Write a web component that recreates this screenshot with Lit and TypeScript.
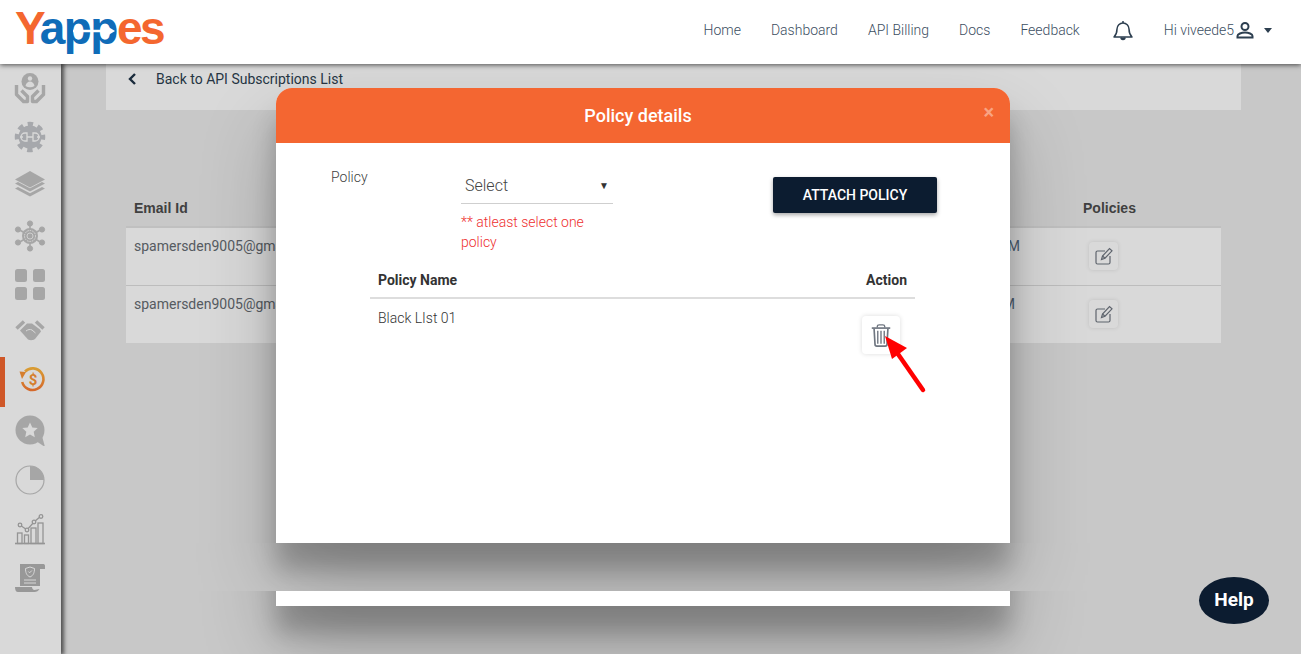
import { LitElement, html, css } from "lit";
import { customElement } from "lit/decorators.js";

const NAV = ["Home", "Dashboard", "API Billing", "Docs", "Feedback"];

const ROWS = [
  { email: "spamersden9005@gmail.com", date: "10:42:18 AM", pad: 69 },
  { email: "spamersden9005@gmail.com", date: "10:40:51 PM", pad: 74 },
];

const SIDE_ICONS = [
  {
    gap: 0,
    icon: html`<svg viewBox="0 0 32 32" fill="#a9a9a9">
      <circle cx="16" cy="9.500" r="8.500" />
      <circle cx="16" cy="6.500" r="2.200" fill="#fff" />
      <path d="M11.500 14c.5-3 2.500-4.500 4.500-4.500s4 1.500 4.500 4.500c-2.700 1.800-6.300 1.800-9 0z" fill="#fff" />
      <path d="M2.500 13v9.500l7 7h4v-5l-6-6" fill="none" stroke="#a9a9a9" stroke-width="3.400" stroke-linejoin="round" />
      <path d="M29.500 13v9.500l-7 7h-4v-5l6-6" fill="none" stroke="#a9a9a9" stroke-width="3.400" stroke-linejoin="round" />
    </svg>`,
  },
  {
    gap: 17,
    icon: html`<svg viewBox="0 0 32 32" fill="#a9acb2">
      <circle cx="16" cy="16" r="11.500" />
      <circle cx="16" cy="16" r="13" fill="none" stroke="#a9acb2" stroke-width="4.500" stroke-dasharray="5.400 4.810" stroke-dashoffset="2.700" />
      <path d="M6 16h3M13 16h6M23 16h3M13 12h-2a4 4 0 0 0 0 8h2zM19 12h2a4 4 0 0 1 0 8h-2z" fill="none" stroke="#fff" stroke-width="1.300" />
    </svg>`,
  },
  {
    gap: 15,
    icon: html`<svg viewBox="0 0 32 32" fill="#a9a9a9">
      <path d="M16 3l15 8.500-15 8-15-8z" />
      <path d="M1 15.500l3-1.600 12 6.400 12-6.400 3 1.600-15 8z" />
      <path d="M1 20.500l3-1.600 12 6.400 12-6.400 3 1.600-15 8z" />
    </svg>`,
  },
  {
    gap: 20,
    icon: html`<svg viewBox="0 0 32 32" fill="#a9a9a9" stroke="#a9a9a9">
      <path d="M16 3v26M4 9l24 14M28 9L4 23" stroke-width="1.600" />
      <circle cx="16" cy="3.500" r="2.600" />
      <circle cx="16" cy="28.500" r="2.600" />
      <circle cx="4" cy="9.500" r="2.600" />
      <circle cx="28" cy="9.500" r="2.600" />
      <circle cx="4" cy="22.500" r="2.600" />
      <circle cx="28" cy="22.500" r="2.600" />
      <circle cx="16" cy="16" r="8" stroke="none" />
      <circle cx="16" cy="16" r="5.500" fill="none" stroke="#fff" stroke-width="1" stroke-dasharray="1.500 1" />
      <circle cx="16" cy="16" r="3" fill="none" stroke="#fff" stroke-width=".8" />
    </svg>`,
  },
  {
    gap: 16,
    icon: html`<svg viewBox="0 0 32 32" fill="#a9a9a9">
      <rect x="1" y="1" width="12" height="13" rx="2.500" />
      <rect x="19" y="1" width="12" height="13" rx="2.500" />
      <rect x="1" y="19" width="12" height="13" rx="2.500" />
      <rect x="19" y="19" width="12" height="13" rx="2.500" />
    </svg>`,
  },
  {
    gap: 13,
    icon: html`<svg viewBox="0 0 32 32" fill="#a9a9a9">
      <path d="M2.500 15.500l7.500-7M29.500 15.500l-7.500-7" stroke="#a9a9a9" stroke-width="3.500" fill="none" />
      <path d="M6 17.500l7-7h5l8 6 1 2-6 7.500c-2 1.500-5 1.500-7 .5z" />
      <path d="M12 18c2-1.500 4-2 6-1l3.500 3" fill="none" stroke="#fff" stroke-width="1" />
    </svg>`,
  },
  {
    gap: 17,
    active: true,
    icon: html`<svg viewBox="0 0 32 32">
      <defs>
        <linearGradient id="refund" x1="0" y1="0" x2="0" y2="1">
          <stop offset="0" stop-color="#ffb83c" />
          <stop offset="1" stop-color="#fb7c33" />
        </linearGradient>
      </defs>
      <path d="M11 9.500a10.800 10.800 0 1 1-2.800 10.500" fill="none" stroke="url(#refund)" stroke-width="2.600" />
      <path d="M5.500 9.500l6.500 .5-4 7z" fill="#fb9435" />
      <text x="19" y="22.500" text-anchor="middle" class="dollar">$</text>
    </svg>`,
  },
  {
    gap: 20,
    icon: html`<svg viewBox="0 0 32 32" fill="#a9a9a9">
      <circle cx="16" cy="16" r="14.500" />
      <path d="M22 27l9 6-3-11z" />
      <path d="M16 8.500l2.300 5 5.400.6-4 3.700 1.100 5.400-4.800-2.800-4.800 2.800 1.100-5.400-4-3.700 5.400-.6z" fill="#fff" />
    </svg>`,
  },
  {
    gap: 18,
    icon: html`<svg viewBox="0 0 32 32" fill="#a9a9a9">
      <circle cx="16" cy="16" r="14" fill="none" stroke="#a9a9a9" stroke-width="1.200" />
      <path d="M16 16V2a14 14 0 0 1 14 14z" />
    </svg>`,
  },
  {
    gap: 18,
    icon: html`<svg viewBox="0 0 32 32" fill="none" stroke="#8a8a8a" stroke-width="1.300">
      <path d="M1 29.500h30" stroke-width="1.600" />
      <rect x="3.500" y="19" width="4.500" height="10.500" />
      <rect x="10.500" y="21" width="4" height="8.500" />
      <rect x="17" y="14" width="5" height="15.500" />
      <rect x="24" y="9" width="5" height="20.500" />
      <path d="M6 11l7 5 7-8 7-6" />
      <circle cx="6" cy="11" r="1.800" fill="#fff" />
      <circle cx="13" cy="16" r="1.800" fill="#fff" />
      <circle cx="20" cy="8" r="1.800" fill="#fff" />
      <circle cx="27" cy="2.500" r="1.800" fill="#fff" />
    </svg>`,
  },
  {
    gap: 15,
    icon: html`<svg viewBox="0 0 32 32" fill="#909090">
      <path d="M6 3h20v22H6z" />
      <path d="M26 3h3.500c1 0 1.500 1 1.500 2v3h-5z" />
      <path d="M1 26h17c0 1.500 1 3 2.500 3l5-1c-1 2-3 3-5 3H4c-2 0-3-2-3-5z" />
      <path d="M16 6l4.500 1.500c0 4-1 7-4.500 8.500-3.500-1.500-4.500-4.500-4.500-8.500z" fill="none" stroke="#fff" stroke-width="1" />
      <path d="M14.300 10.500l1.300 1.300 2.300-2.300M10 19h12M10 22h12" fill="none" stroke="#fff" stroke-width="1" />
    </svg>`,
  },
];

@customElement("app-root")
export class AppRoot extends LitElement {
  static styles = css`
    :host {
      display: block;
      width: 1301px;
      height: 654px;
      overflow: hidden;
      position: relative;
      font-family: Roboto, "Liberation Sans", sans-serif;
      font-size: 14px;
      color: #2d3f50;
      background: #ebebeb;
    }
    .topbar {
      position: relative;
      z-index: 30;
      height: 64px;
      background: #fff;
      box-shadow: 0 1px 5px rgba(0, 0, 0, 0.65);
      display: flex;
      align-items: center;
      justify-content: space-between;
      padding: 0 29px 0 15px;
    }
    .logo {
      position: relative;
      font-family: "Liberation Sans", Arial, sans-serif;
      font-weight: 700;
      font-size: 46px;
      line-height: 46px;
      letter-spacing: -2.6px;
      color: #f4672f;
      margin-top: -8px;
      white-space: nowrap;
    }
    .logo i {
      font-style: normal;
      letter-spacing: -6px;
    }
    .logo b {
      color: #0f6cb8;
      letter-spacing: -1.5px;
    }
    .logo svg {
      position: absolute;
      left: 58px;
      top: 19px;
      width: 45px;
      height: 14px;
    }
    .nav {
      display: flex;
      align-items: center;
      gap: 30px;
      color: #3c4e5f;
      font-weight: 300;
      margin-top: -4px;
    }
    .user {
      display: flex;
      align-items: center;
      font-weight: 300;
    }
    .bell {
      width: 22px;
      height: 22px;
      display: block;
      margin-left: 2px;
    }
    .person {
      width: 22px;
      height: 22px;
      margin: 0 4px 0 0;
    }
    .caret {
      width: 0;
      height: 0;
      margin-left: 4px;
      border: 4.500px solid transparent;
      border-top: 5px solid #2d3f50;
      border-bottom: 0;
    }
    .layout {
      display: flex;
      height: 590px;
    }
    .side {
      width: 61px;
      flex: none;
      background: #fff;
      box-shadow: 2px 0 4px 1px rgba(0, 0, 0, 0.6);
      padding-top: 8px;
      position: relative;
      z-index: 2;
      box-sizing: border-box;
    }
    .side-item {
      position: relative;
      width: 32px;
      height: 32px;
      margin-left: 14px;
    }
    .side-item svg {
      width: 32px;
      height: 32px;
      display: block;
      opacity: 0.68;
    }
    .side-item.active svg {
      opacity: 1;
    }
    .side-item.active::before {
      content: "";
      position: absolute;
      left: -14px;
      top: -5px;
      width: 5px;
      height: 50px;
      background: #f4672f;
    }
    .dollar {
      font: 700 15px Roboto, sans-serif;
      fill: #fb9435;
    }
    .main {
      flex: 1;
      padding-left: 45px;
      min-width: 0;
    }
    .back {
      width: 1135px;
      height: 46px;
      background: #fff;
      padding: 7px 21px;
      box-sizing: border-box;
      display: flex;
      align-items: flex-start;
      gap: 19px;
      line-height: 17px;
    }
    .back svg {
      width: 10px;
      height: 14px;
      margin-top: 1px;
    }
    .table {
      width: 1095px;
      margin: 80px 0 0 20px;
    }
    .thead {
      display: flex;
      height: 38px;
      border-bottom: 2px solid #e2e2e2;
      box-sizing: border-box;
      font-family: "Liberation Sans", Arial, sans-serif;
      font-weight: 700;
      align-items: center;
      padding: 0 8px;
      justify-content: space-between;
      color: #4c4c4c;
    }
    .thead span:last-child {
      width: 130px;
    }
    .trow {
      display: flex;
      height: 58px;
      background: #fff;
      border-bottom: 1px solid #dedede;
      box-sizing: border-box;
      padding: 10px 0 0 8px;
      color: #666c72;
    }
    .trow:last-child {
      height: 57px;
      border-bottom: 0;
    }
    .email {
      flex: 1;
    }
    .date {
      text-align: right;
      color: #5a6e85;
    }
    .edit {
      width: 132px;
      flex: none;
    }
    .icon-btn {
      width: 29px;
      height: 28px;
      margin: 4px 0 0 0;
      background: #fff;
      border-radius: 4px;
      box-shadow: 0 0 4px rgba(0, 0, 0, 0.12);
      display: flex;
      align-items: center;
      justify-content: center;
    }
    .icon-btn svg {
      width: 20px;
      height: 20px;
    }
    .scrim {
      position: absolute;
      inset: 0;
      z-index: 10;
      background: rgba(0, 0, 0, 0.15);
      padding: 88px 0 0 276px;
      box-sizing: border-box;
    }
    .modal {
      position: relative;
      width: 734px;
      height: 518px;
      background: #fff;
      border-radius: 16px 16px 0 0;
      box-shadow: 0 27px 24px rgba(0, 0, 0, 0.22), 0 40px 77px rgba(0, 0, 0, 0.22);
    }
    /* doubled sheet seen in the capture: a copy of the shadow of a shorter modal */
    .band {
      position: absolute;
      left: -90px;
      right: -90px;
      top: 455px;
      height: 48px;
      overflow: hidden;
      background: #c8c8c8;
    }
    .band::before {
      content: "";
      position: absolute;
      left: 90px;
      right: 90px;
      top: -455px;
      height: 455px;
      background: #fff;
      box-shadow: 0 27px 24px rgba(0, 0, 0, 0.22), 0 40px 77px rgba(0, 0, 0, 0.22);
    }
    .modal-head {
      height: 55px;
      background: #f46631;
      border-radius: 16px 16px 0 0;
      color: #fff;
      font-size: 18px;
      font-weight: 500;
      display: flex;
      align-items: center;
      justify-content: center;
      padding-right: 10px;
      position: relative;
    }
    .close {
      position: absolute;
      right: 16px;
      top: 12px;
      font-size: 20px;
      font-weight: 700;
      line-height: 24px;
      color: #f9a483;
    }
    .form {
      display: flex;
      padding: 24px 0 0 55px;
    }
    .form-label {
      width: 130px;
      font-weight: 300;
      color: #3f3f3f;
      line-height: 20px;
    }
    .select-col {
      width: 152px;
    }
    .select {
      height: 37px;
      border-bottom: 1px solid #cfcfcf;
      display: flex;
      align-items: center;
      justify-content: space-between;
      padding: 0 4px;
      font-size: 16px;
      font-weight: 300;
      color: #444;
      box-sizing: border-box;
    }
    .arrow {
      font-size: 10px;
      color: #333;
    }
    .error {
      margin-top: 8px;
      color: #ee2f2f;
      font-weight: 300;
      line-height: 20px;
    }
    .attach {
      width: 164px;
      height: 36px;
      margin: 10px 0 0 160px;
      background: #0c1c30;
      color: #fff;
      font-weight: 500;
      border-radius: 2px;
      box-shadow: 0 2px 4px rgba(0, 0, 0, 0.35);
      display: flex;
      align-items: center;
      justify-content: center;
    }
    .policies {
      width: 545px;
      margin: 9px 0 0 94px;
    }
    .p-head {
      display: flex;
      justify-content: space-between;
      align-items: center;
      height: 38px;
      box-sizing: border-box;
      padding: 2px 8px 0;
      font-weight: 700;
      color: #333;
      border-bottom: 2px solid #ddd;
    }
    .p-row {
      display: flex;
      justify-content: space-between;
      padding: 11px 15px 0 8px;
      color: #333;
      font-weight: 300;
      line-height: 17px;
    }
    .trash {
      width: 38px;
      height: 38px;
      margin-top: 6px;
      border-radius: 4px;
      background: #fff;
      box-shadow: 0 0 5px rgba(0, 0, 0, 0.14);
      display: flex;
      align-items: center;
      justify-content: center;
    }
    .trash svg {
      width: 24px;
      height: 26px;
    }
    .pointer {
      position: absolute;
      left: 600px;
      top: 240px;
      width: 60px;
      height: 70px;
    }
    .help {
      position: absolute;
      z-index: 40;
      left: 1199px;
      top: 577px;
      width: 70px;
      height: 47px;
      padding-bottom: 2px;
      box-sizing: border-box;
      border-radius: 50%;
      background: #0c1c30;
      color: #fff;
      font-size: 19px;
      font-weight: 700;
      display: flex;
      align-items: center;
      justify-content: center;
    }
  `;

  private editIcon() {
    return html`<svg viewBox="0 0 20 20" fill="none" stroke="#6f7680" stroke-width="1.200">
      <path d="M16 10v6.500a1.500 1.500 0 0 1-1.500 1.500h-11A1.500 1.500 0 0 1 2 16.500v-10A1.500 1.500 0 0 1 3.500 5H11" />
      <path d="M7.500 13.500l1-3.500 7-7.500 2.500 2.300-7 7.400z" />
      <path d="M8.500 10l2.500 2.300" />
    </svg>`;
  }

  render() {
    return html`
      <header class="topbar">
        <div class="logo">
          <i>Y</i><b>app</b>es
          <svg viewBox="0 0 45 14">
            <path d="M0 7h36" stroke="#fff" stroke-width="2.500" />
            <path d="M33 1.500l9 5.500-9 5.500z" fill="#fff" />
          </svg>
        </div>
        <nav class="nav">
          ${NAV.map((n) => html`<span>${n}</span>`)}
          <svg class="bell" viewBox="0 0 22 22" fill="none" stroke="#2d3f50" stroke-width="1.500">
            <path d="M2 18c2-2 3-3.500 3-8a6 6 0 0 1 12 0c0 4.500 1 6 3 8z" stroke-linejoin="round" />
            <path d="M9 18.500a2 2 0 0 0 4 0" fill="#2d3f50" />
            <path d="M11 2v2" />
          </svg>
          <span class="user">
            Hi viveede5
            <svg class="person" viewBox="0 0 22 22" fill="none" stroke="#2d3f50" stroke-width="2">
              <circle cx="11" cy="7.500" r="3.500" />
              <path d="M3.500 18.500v-1.500c0-2 4-3.500 7.500-3.500s7.500 1.500 7.500 3.500v1.500z" />
            </svg>
            <span class="caret"></span>
          </span>
        </nav>
      </header>
      <div class="layout">
        <aside class="side">
          ${SIDE_ICONS.map(
            (s) => html`<div
              class="side-item ${s.active ? "active" : ""}"
              style="margin-top:${s.gap}px"
            >
              ${s.icon}
            </div>`
          )}
        </aside>
        <section class="main">
          <div class="back">
            <svg viewBox="0 0 10 14" fill="none" stroke="#1f3347" stroke-width="2.400">
              <path d="M8 2L3 7l5 5" />
            </svg>
            <span>Back to API Subscriptions List</span>
          </div>
          <div class="table">
            <div class="thead"><span>Email Id</span><span>Policies</span></div>
            ${ROWS.map(
              (r) => html`<div class="trow">
                <span class="email">${r.email}</span>
                <span class="date" style="padding-right:${r.pad}px">${r.date}</span>
                <div class="edit"><div class="icon-btn">${this.editIcon()}</div></div>
              </div>`
            )}
          </div>
        </section>
      </div>
      <div class="scrim">
        <div class="modal">
          <div class="band"></div>
          <div class="modal-head">Policy details<span class="close">×</span></div>
          <div class="form">
            <div class="form-label">Policy</div>
            <div class="select-col">
              <div class="select"><span>Select</span><span class="arrow">▼</span></div>
              <div class="error">** atleast select one policy</div>
            </div>
            <div class="attach">ATTACH POLICY</div>
          </div>
          <div class="policies">
            <div class="p-head"><span>Policy Name</span><span>Action</span></div>
            <div class="p-row">
              <span>Black LIst 01</span>
              <div class="trash">
                <svg viewBox="0 0 26 26" fill="none" stroke="#6f7680" stroke-width="1.500">
                  <path d="M3 5.500h20" stroke-width="1.800" />
                  <path d="M9 5V3.500C9 2.500 10 2 11 2h4c1 0 2 .5 2 1.500V5" />
                  <path d="M5.500 6l1 17c0 1 .8 2 2 2h9c1.200 0 2-1 2-2l1-17" stroke-width="1.800" />
                  <path d="M9.500 8.500v14M13 8.500v14M16.500 8.500v14" />
                </svg>
              </div>
            </div>
          </div>
          <svg class="pointer" viewBox="0 0 60 70">
            <path d="M47 62L15 16" stroke="#f00" stroke-width="4.500" stroke-linecap="round" />
            <path d="M9 8l22 12-15 11z" fill="#f00" />
          </svg>
        </div>
      </div>
      <div class="help">Help</div>
    `;
  }
}
